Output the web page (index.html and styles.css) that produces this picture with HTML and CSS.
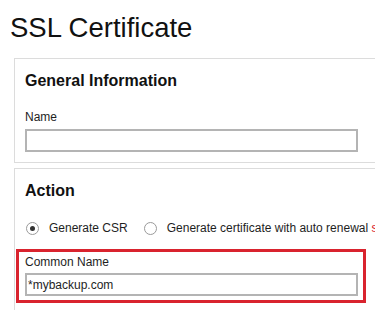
FILE: index.html
```html
<!DOCTYPE html>
<html lang="en">
<head>
<meta charset="utf-8">
<title>SSL Certificate</title>
<link rel="stylesheet" href="styles.css">
</head>
<body>
<div class="page">
  <h1 class="page-title">SSL Certificate</h1>

  <section class="card card-general">
    <h2 class="card-title">General Information</h2>
    <div class="field">
      <label class="field-label" for="name">Name</label>
      <input class="text-input" id="name" type="text" value="">
    </div>
  </section>

  <section class="card card-action">
    <h2 class="card-title">Action</h2>
    <div class="radio-row">
      <label class="radio-option">
        <span class="radio checked"></span>
        <span class="radio-text">Generate CSR</span>
      </label>
      <label class="radio-option">
        <span class="radio"></span>
        <span class="radio-text">Generate certificate with auto renewal <span class="radio-link">settings</span></span>
      </label>
    </div>
    <div class="field field-highlight">
      <label class="field-label" for="cn">Common Name</label>
      <input class="text-input" id="cn" type="text" value="*mybackup.com">
    </div>
  </section>
</div>
</body>
</html>
```

FILE: styles.css
```css
html, body {
  margin: 0;
  padding: 0;
  background: #ffffff;
}

body {
  font-family: "Liberation Sans", Arial, sans-serif;
  color: #222222;
  overflow: hidden;
}

.page {
  width: 375px;
  height: 310px;
  overflow: hidden;
}

.page-title {
  margin: 12px 0 14px 10px;
  font-size: 27.5px;
  line-height: 32px;
  font-weight: normal;
  color: #111111;
}

.card {
  margin-left: 14px;
  width: 440px;
  border: 1px solid #dcdcdc;
  box-sizing: border-box;
  padding: 12px 0 10px 0;
}

.card-action {
  margin-top: 5px;
  padding-bottom: 20px;
}

.card-title {
  margin: 0 0 19px 10px;
  font-size: 16px;
  line-height: 20px;
  font-weight: bold;
  color: #111111;
}

.card-action .card-title {
  margin-bottom: 17px;
}

.field {
  display: flex;
  flex-direction: column;
  padding-left: 10px;
}

.field-label {
  font-size: 12px;
  line-height: 14px;
  margin-bottom: 5px;
  color: #1e1e1e;
}

.text-input {
  width: 333px;
  height: 23px;
  box-sizing: border-box;
  border: 2px solid #b4b4b4;
  padding: 0 1px;
  margin: 0;
  font-family: "Liberation Sans", Arial, sans-serif;
  font-size: 12px;
  color: #1e1e1e;
  background: #ffffff;
  outline: none;
}

.radio-row {
  display: flex;
  align-items: center;
  height: 20px;
  padding-left: 11px;
  white-space: nowrap;
  margin-bottom: 11px;
}

.radio-option {
  display: flex;
  align-items: center;
  font-size: 12px;
  line-height: 20px;
  color: #1e1e1e;
}

.radio-option + .radio-option {
  margin-left: 16px;
}

.radio {
  width: 13px;
  height: 13px;
  box-sizing: border-box;
  border: 1px solid #9a9a9a;
  border-radius: 50%;
  margin-right: 10px;
  display: flex;
  align-items: center;
  justify-content: center;
  background: #ffffff;
}

.radio.checked::after {
  content: "";
  width: 5px;
  height: 5px;
  border-radius: 50%;
  background: #333333;
}

.radio-link {
  color: #d9232e;
}

.field-highlight {
  width: 350px;
  box-sizing: border-box;
  margin-left: 1px;
  border: 3px solid #d9232e;
  padding: 3px 5px 4px 6px;
}

.field-highlight .field-label {
  margin-bottom: 4px;
}
```
